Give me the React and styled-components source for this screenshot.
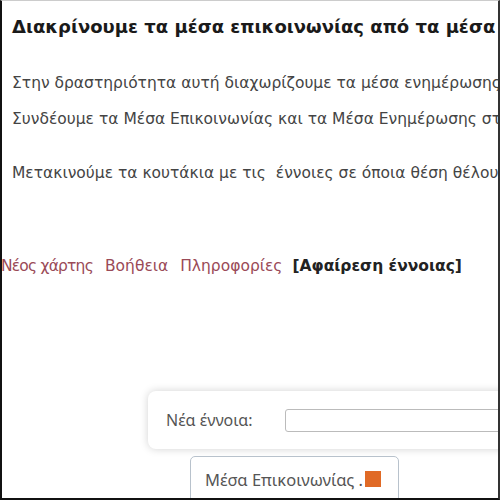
import React from "react";
import styled, { createGlobalStyle } from "styled-components";

const Global = createGlobalStyle`
  html, body { margin: 0; padding: 0; background: #fff; }
  body { font-family: "DejaVu Sans", Verdana, sans-serif; }
`;

const Frame = styled.div`
  box-sizing: border-box;
  width: 500px;
  height: 500px;
  overflow: hidden;
  position: relative;
  background: #fff;
  border-top: 1px solid #ccc;
  border-left: 2px solid #111;
  border-right: 2px solid #333;
  border-bottom: 2px solid #111;
  display: flex;
  flex-direction: column;
`;

const Content = styled.div`
  padding: 0 0 0 10px;
  white-space: nowrap;
`;

const Title = styled.h1`
  margin: 14px 0 0;
  font-size: 18px;
  font-weight: bold;
  color: #1a1a1a;
  line-height: 24px;
`;

const Para = styled.p`
  margin: ${(p) => p.$top}px 0 0;
  font-size: 15.5px;
  line-height: 20px;
  color: #444;
`;

const Menu = styled.div`
  margin: 73px 0 0 -1px;
  display: flex;
  align-items: center;
  gap: 12px;
  font-size: 15.5px;
  line-height: 20px;
  white-space: nowrap;
`;

const MenuLink = styled.span`
  color: ${(p) => (p.$dark ? "#222" : "#9a4a57")};
  font-weight: ${(p) => (p.$dark ? "bold" : "normal")};
  margin-left: ${(p) => (p.$dark ? "-2px" : "0")};
  letter-spacing: ${(p) => (p.$tight ? "-0.8px" : "normal")};
`;

const Panel = styled.div`
  margin: 115px 0 0 146px;
  width: 400px;
  height: 58px;
  border-radius: 8px;
  background: #fff;
  box-shadow: 0 0 8px rgba(0, 0, 0, 0.18);
  display: flex;
  align-items: center;
  padding-left: 18px;
  box-sizing: border-box;
  flex-shrink: 0;
`;

const Label = styled.span`
  font-family: "Noto Sans", "DejaVu Sans", sans-serif;
  font-size: 16px;
  color: #555;
  width: 119px;
`;

const Input = styled.div`
  height: 21px;
  flex: 1;
  border: 1px solid #bbb;
  border-radius: 3px;
`;

const Node = styled.div`
  margin: 7px 0 0 188px;
  width: 209px;
  height: 50px;
  flex-shrink: 0;
  border: 1.5px solid #b8c2cc;
  border-radius: 5px;
  background: #fff;
  box-sizing: border-box;
  display: flex;
  align-items: flex-start;
  padding: 12px 0 0 14px;
  gap: 2px;
`;

const NodeText = styled.span`
  font-family: "Noto Sans", "DejaVu Sans", sans-serif;
  font-size: 16.5px;
  color: #555;
  line-height: 22px;
`;

const Swatch = styled.span`
  width: 16px;
  height: 16px;
  background: #e06a26;
  margin-top: 2px;
`;

export default function App() {
  return (
    <>
      <Global />
      <Frame>
        <Content>
          <Title>Διακρίνουμε τα μέσα επικοινωνίας από τα μέσα ενημέρωσης</Title>
          <Para $top={34}>Στην δραστηριότητα αυτή διαχωρίζουμε τα μέσα ενημέρωσης από τα μέσα επικοινωνίας.</Para>
          <Para $top={16}>Συνδέουμε τα Μέσα Επικοινωνίας και τα Μέσα Ενημέρωσης στις κατάλληλες έννοιες.</Para>
          <Para $top={34}>Μετακινούμε τα κουτάκια με τις&nbsp; έννοιες σε όποια θέση θέλουμε.</Para>
        </Content>
        <Menu>
          <MenuLink $tight>Νέος χάρτης</MenuLink>
          <MenuLink>Βοήθεια</MenuLink>
          <MenuLink>Πληροφορίες</MenuLink>
          <MenuLink $dark>[Αφαίρεση έννοιας]</MenuLink>
        </Menu>
        <Panel>
          <Label>Νέα έννοια:</Label>
          <Input />
        </Panel>
        <Node>
          <NodeText>Μέσα Επικοινωνίας .</NodeText>
          <Swatch />
        </Node>
      </Frame>
    </>
  );
}
